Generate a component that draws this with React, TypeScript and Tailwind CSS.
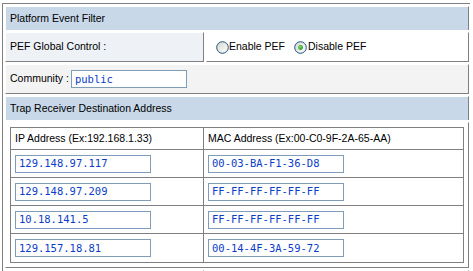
import React from 'react';

const traps = [
  { ip: '129.148.97.117', mac: '00-03-BA-F1-36-D8' },
  { ip: '129.148.97.209', mac: 'FF-FF-FF-FF-FF-FF' },
  { ip: '10.18.141.5', mac: 'FF-FF-FF-FF-FF-FF' },
  { ip: '129.157.18.81', mac: '00-14-4F-3A-59-72' },
];

function Radio({ checked }: { checked?: boolean }) {
  return (
    <svg width="13" height="13" viewBox="0 0 13 13" className="shrink-0">
      <defs>
        <linearGradient id="rfill" x1="0" y1="0" x2="1" y2="1">
          <stop offset="0" stopColor="#d6d6ce" />
          <stop offset="1" stopColor="#ffffff" />
        </linearGradient>
        <radialGradient id="rdot" cx="0.4" cy="0.4" r="0.6">
          <stop offset="0" stopColor="#7ee07e" />
          <stop offset="1" stopColor="#1c9a1c" />
        </radialGradient>
      </defs>
      <circle cx="6.5" cy="6.5" r="5.8" fill="url(#rfill)" stroke="#1c5180" strokeWidth="1" />
      {checked && <circle cx="6.5" cy="6.5" r="2.4" fill="url(#rdot)" />}
    </svg>
  );
}

function Field({ value, width }: { value: string; width: string }) {
  return (
    <div
      className={`${width} h-[18px] border border-[#7f9db9] bg-white pl-[3px] flex items-center text-[10.5px] text-[#0a3ec8] leading-none`}
      style={{ fontFamily: '"DejaVu Sans Mono", monospace' }}
    >
      {value}
    </div>
  );
}

export default function App() {
  const cell = 'border-t border-l border-t-white border-l-white border-r border-b border-r-[#808080] border-b-[#808080]';
  const head = 'border-t border-l border-t-white border-l-white border-r border-r-[#808080] bg-[#c8d8e8]';

  return (
    <div
      className="w-[473px] h-[271px] overflow-hidden bg-white text-[10.5px] text-black"
      style={{ fontFamily: '"Liberation Sans", Arial, sans-serif' }}
    >
      <div className="ml-[2px] mt-[3px] w-[468px] border-t border-l border-[#808080] pt-[2px] pl-[2px] pr-[1px] flex flex-col gap-[2px]">
        <div className={`${head} h-[24px] flex items-center pl-[4px]`}>Platform Event Filter</div>

        <div className="flex gap-[2px] h-[30px]">
          <div className={`${cell} w-[199px] bg-[#eef1f5] flex items-center pl-[4px]`}>PEF Global Control :</div>
          <div className={`${cell} flex-1 flex items-center pl-[9px]`}>
            <Radio />
            <span className="ml-[0px] w-[65px]">Enable PEF</span>
            <Radio checked />
            <span className="ml-[1px]">Disable PEF</span>
          </div>
        </div>

        <div className={`${cell} h-[30px] bg-[#f3f3f3] flex items-center pl-[4px]`}>
          <span>Community :</span>
          <div className="ml-[2px]">
            <Field value="public" width="w-[116px]" />
          </div>
        </div>

        <div className={`${head} h-[24px] flex items-center pl-[4px]`}>Trap Receiver Destination Address</div>

        <div className={`${cell} h-[146px] pt-[4px] pl-[4px]`}>
          <div className="w-[454px] border border-[#808080] grid grid-cols-[193px_1fr]">
            <div className="h-[22px] border-r border-b border-[#808080] flex items-center pl-[4px]">
              IP Address (Ex:192.168.1.33)
            </div>
            <div className="h-[22px] border-b border-[#808080] flex items-center pl-[4px]">
              MAC Address (Ex:00-C0-9F-2A-65-AA)
            </div>
            {traps.map((t, i) => (
              <React.Fragment key={i}>
                <div
                  className={`h-[28px] border-r border-[#808080] flex items-center pl-[4px] ${i < traps.length - 1 ? 'border-b' : ''}`}
                >
                  <Field value={t.ip} width="w-[136px]" />
                </div>
                <div
                  className={`h-[28px] border-[#808080] flex items-center pl-[4px] ${i < traps.length - 1 ? 'border-b' : ''}`}
                >
                  <Field value={t.mac} width="w-[136px]" />
                </div>
              </React.Fragment>
            ))}
          </div>
        </div>

        <div className="flex gap-[2px] h-[30px]">
          <div className={`${cell} w-[199px]`} />
          <div className={`${cell} flex-1`} />
        </div>
      </div>
    </div>
  );
}
